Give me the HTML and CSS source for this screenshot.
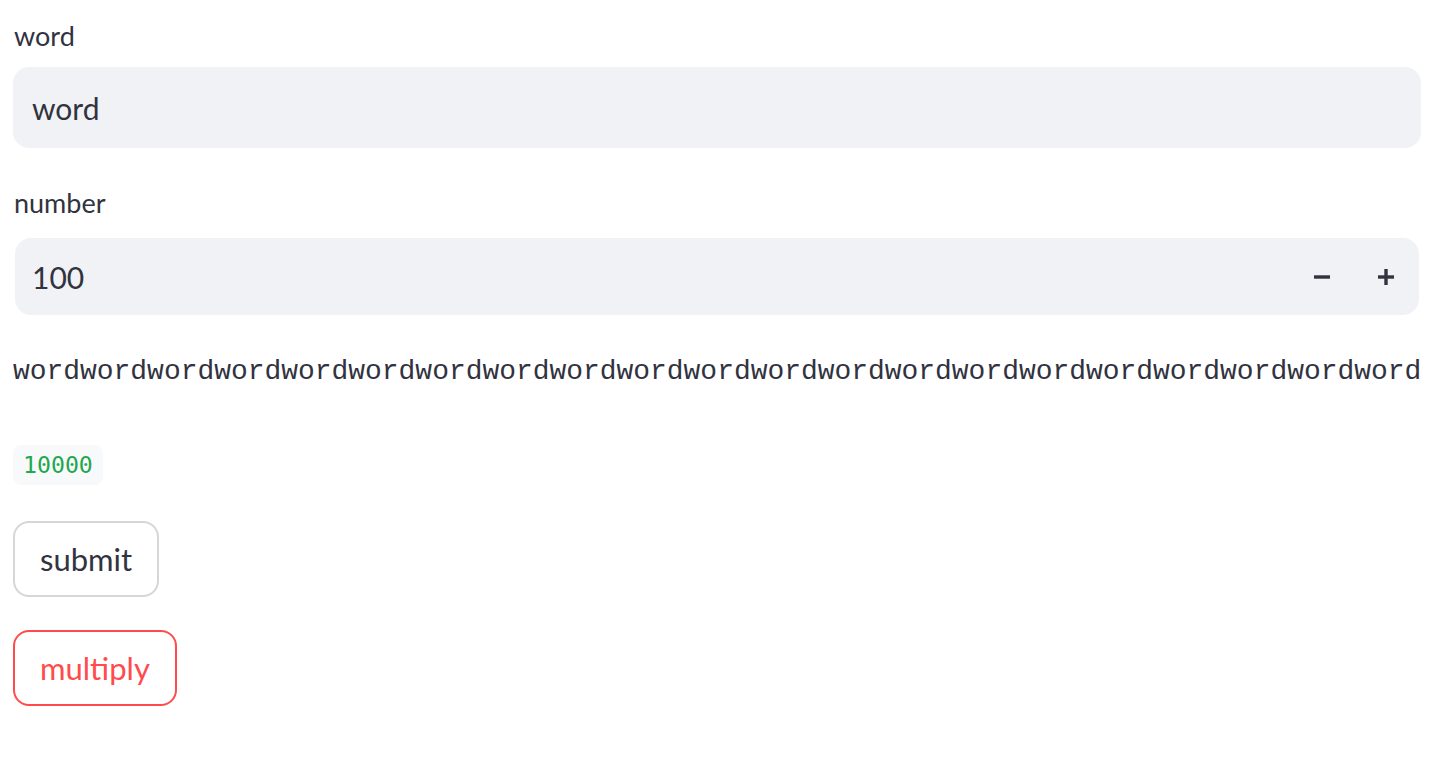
FILE: index.html
```html
<!DOCTYPE html>
<html>
	<head>
		<title>word multiplier</title>
		<link rel="stylesheet" href="styles.css">
	</head>
	<body>
		<div class="block">
			<div class="field">
				<label class="label">word</label>
				<div class="input text-input">word</div>
			</div>
			<div class="field number-field">
				<label class="label">number</label>
				<div class="input number-input">
					<span class="value">100</span>
					<span class="step">
						<svg width="18" height="18" viewBox="0 0 18 18"><rect x="1" y="7.3" width="16" height="3.4" fill="#31333f"/></svg>
					</span>
					<span class="step">
						<svg width="18" height="18" viewBox="0 0 18 18"><rect x="1" y="7.3" width="16" height="3.4" fill="#31333f"/><rect x="7.3" y="1" width="3.4" height="16" fill="#31333f"/></svg>
					</span>
				</div>
			</div>
			<div class="mono">wordwordwordwordwordwordwordwordwordwordwordwordwordwordwordwordwordwordwordwordword</div>
			<div class="code-row"><code class="code">10000</code></div>
			<div class="btn-row"><button class="btn">submit</button></div>
			<div class="btn-row"><button class="btn btn-red">multiply</button></div>
		</div>
	</body>
</html>
```

FILE: styles.css
```css
html, body {
	margin: 0;
	background: #ffffff;
	color: #31333f;
	font-family: Lato, "Open Sans", sans-serif;
}

.block {
	width: 1408px;
	padding: 20px 0 0 13px;
}

.label {
	display: block;
	height: 32px;
	font-size: 27px;
	line-height: 32px;
	margin-left: 1px;
}

.field {
	margin-bottom: 39px;
}

.input {
	display: flex;
	align-items: center;
	background: #f0f2f6;
	border-radius: 16px;
	box-sizing: border-box;
	font-size: 30px;
}

.text-input {
	height: 81px;
	margin-top: 15px;
	padding-left: 19px;
}

.number-field {
	margin-bottom: 38px;
}

.number-input {
	height: 77px;
	margin: 19px 2px 0 2px;
	padding-left: 17px;
	padding-right: 1px;
}

.value {
	flex: 1;
}

.step {
	display: flex;
	align-items: center;
	justify-content: center;
	width: 64px;
	height: 100%;
}

.mono {
	font-family: "Liberation Mono", monospace;
	font-size: 27.95px;
	line-height: 38px;
	white-space: nowrap;
}

.code-row {
	margin-top: 54px;
}

.code {
	display: inline-block;
	font-family: "DejaVu Sans Mono", monospace;
	font-size: 23.2px;
	line-height: 40px;
	padding: 0 10px;
	background: #f8f9fa;
	border-radius: 8px;
	color: #1fa84f;
}

.btn-row {
	margin-top: 36px;
}

.btn-row + .btn-row {
	margin-top: 33px;
}

.btn {
	height: 76px;
	padding: 0 25px;
	border: 2px solid #d5d6d9;
	border-radius: 16px;
	background: #ffffff;
	color: #31333f;
	font-family: Lato, "Open Sans", sans-serif;
	font-size: 31px;
}

.btn-red {
	border-color: #ff4b4b;
	color: #ff4b4b;
}
```
